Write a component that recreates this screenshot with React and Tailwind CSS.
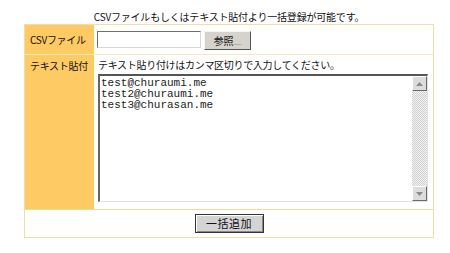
import React from 'react';

const jp = { fontFamily: '"MS PGothic", "Noto Sans CJK JP", sans-serif' };

function ScrollButton({ down }) {
  return (
    <div className="w-[15px] h-[15px] bg-[#dcdcdc] border border-t-white border-l-white border-b-[#6b6b6b] border-r-[#6b6b6b] flex items-center justify-center">
      <svg width="7" height="4" viewBox="0 0 7 4">
        {down ? (
          <polygon points="0,0 7,0 3.5,4" fill="#8a8a8a" />
        ) : (
          <polygon points="0,4 7,4 3.5,0" fill="#8a8a8a" />
        )}
      </svg>
    </div>
  );
}

export default function App() {
  const emails = ['test@churaumi.me', 'test2@churaumi.me', 'test3@churasan.me'];

  return (
    <div className="w-[450px] h-[253px] bg-white pt-[10px]" style={jp}>
      <p className="ml-[24px] w-[410px] h-[14px] text-center text-[10px] leading-[14px] tracking-[-0.2px] text-[#111]">
        CSVファイルもしくはテキスト貼付より一括登録が可能です。
      </p>

      <div className="ml-[24px] w-[410px] border border-[#ece0a4] text-[10px] tracking-[-0.3px] text-[#111]">
        {/* CSV row */}
        <div className="flex h-[30px] border-b border-[#f3e9bd]">
          <div className="w-[69px] bg-[#fdca63] pl-[5px] flex items-center">CSVファイル</div>
          <div className="flex-1 flex items-center pl-[3px] gap-[3px]">
            <div className="w-[104px] h-[17px] bg-white border border-t-[#6e6e6e] border-l-[#6e6e6e] border-b-[#d8d8d8] border-r-[#d8d8d8]" />
            <button className="w-[47px] h-[19px] mt-[2px] bg-[#d6d3cc] border border-t-[#f5f5f5] border-l-[#f5f5f5] border-b-[#555] border-r-[#555] flex items-center justify-center text-[10px] leading-none">
              参照<span className="text-[6px] mt-[5px] text-[#666]">......</span>
            </button>
          </div>
        </div>

        {/* Text paste row */}
        <div className="flex h-[155px] border-b border-[#eadc96]">
          <div className="w-[69px] bg-[#fdca63] pl-[5px] pt-[3px]">テキスト貼付</div>
          <div className="flex-1 pl-[4px] pr-[5px] pt-[3px] pb-[7px] flex flex-col">
            <p className="leading-[13px]">テキスト貼り付けはカンマ区切りで入力してください。</p>
            <div className="mt-[3px] flex-1 flex bg-white border-t-2 border-l-2 border-t-[#555] border-l-[#666] border-b border-r border-b-[#e2e2e2] border-r-[#e2e2e2]">
              <div
                className="flex-1 pl-[1px] pt-[2px] text-[11px] leading-[11px] tracking-normal text-[#222]"
                style={{ fontFamily: '"Liberation Mono", "DejaVu Sans Mono", monospace' }}
              >
                {emails.map((e) => (
                  <div key={e}>{e}</div>
                ))}
              </div>
              <div className="w-[15px] flex flex-col">
                <ScrollButton />
                <div className="flex-1 bg-[repeating-conic-gradient(#cfcfcf_0_25%,#f4f4f4_0_50%)] bg-[length:2px_2px]" />
                <ScrollButton down />
              </div>
            </div>
          </div>
        </div>

        {/* Submit row */}
        <div className="h-[27px] flex items-center justify-center">
          <button className="w-[69px] h-[19px] bg-[#d4d4d4] border border-[#333] shadow-[inset_1px_1px_0_#fff,inset_-1px_-1px_0_#888] text-[11px] leading-none tracking-[0.5px] text-[#111]">
            一括追加
          </button>
        </div>
      </div>
    </div>
  );
}
